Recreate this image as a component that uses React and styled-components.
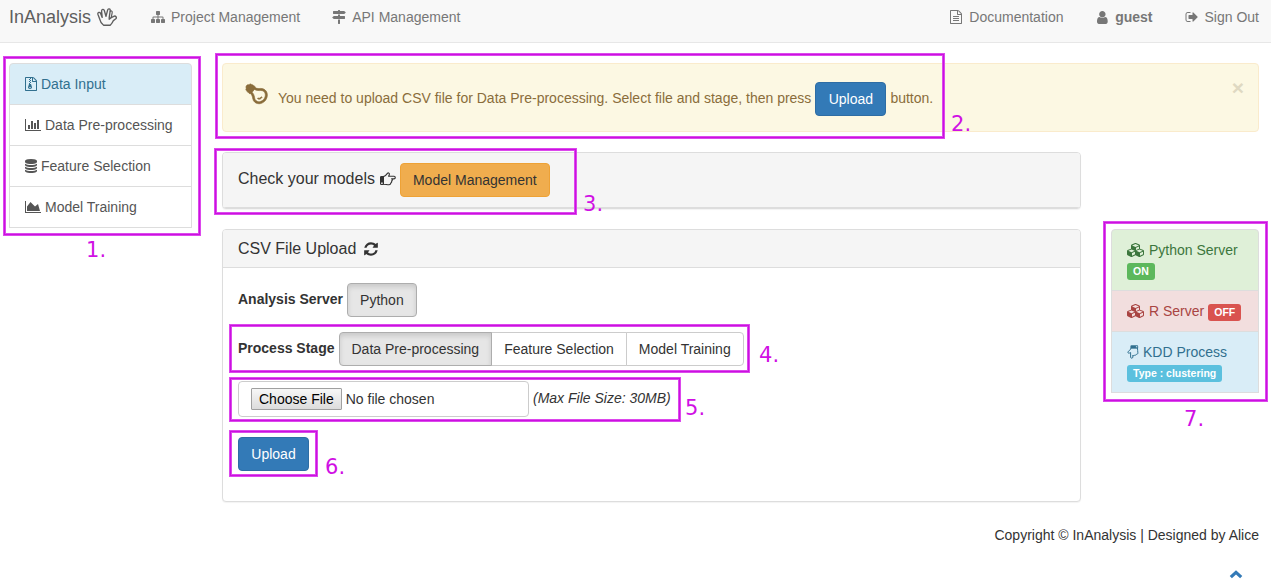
import React from 'react';
import styled, { createGlobalStyle, css } from 'styled-components';

const GlobalStyle = createGlobalStyle`
  * { box-sizing: border-box; }
  body {
    margin: 0;
    overflow: hidden;
    background: #fff;
    color: #333;
    font: 14px/20px "Liberation Sans", Arial, sans-serif;
  }
`;

const paths = {
  sitemap: 'M1792 1248v320q0 40-28 68t-68 28h-320q-40 0-68-28t-28-68v-320q0-40 28-68t68-28h96v-192h-512v192h96q40 0 68 28t28 68v320q0 40-28 68t-68 28h-320q-40 0-68-28t-28-68v-320q0-40 28-68t68-28h96v-192h-512v192h96q40 0 68 28t28 68v320q0 40-28 68t-68 28h-320q-40 0-68-28t-28-68v-320q0-40 28-68t68-28h96v-192q0-52 38-90t90-38h512v-192h-96q-40 0-68-28t-28-68v-320q0-40 28-68t68-28h320q40 0 68 28t28 68v320q0 40-28 68t-68 28h-96v192h512q52 0 90 38t38 90v192h96q40 0 68 28t28 68z',
  signs: 'M1745 297q10 10 10 23t-10 23l-141 141q-28 28-68 28h-1344q-26 0-45-19t-19-45v-256q0-26 19-45t45-19h576v-64q0-26 19-45t45-19h128q26 0 45 19t19 45v64h512q40 0 68 28zm-977 919h256v512q0 26-19 45t-45 19h-128q-26 0-45-19t-19-45v-512zm832-448q26 0 45 19t19 45v256q0 26-19 45t-45 19h-1344q-40 0-68-28l-141-141q-10-10-10-23t10-23l141-141q28-28 68-28h512v-192h256v192h576z',
  fileText: 'M1596 380q28 28 48 76t20 88v1152q0 40-28 68t-68 28h-1344q-40 0-68-28t-28-68v-1600q0-40 28-68t68-28h896q40 0 88 20t76 48zm-444-244v376h376q-10-29-22-41l-313-313q-12-12-41-22zm384 1528v-1024h-416q-40 0-68-28t-28-68v-416h-768v1536h1280zm-1024-864q0-14 9-23t23-9h704q14 0 23 9t9 23v64q0 14-9 23t-23 9h-704q-14 0-23-9t-9-23v-64zm736 224q14 0 23 9t9 23v64q0 14-9 23t-23 9h-704q-14 0-23-9t-9-23v-64q0-14 9-23t23-9h704zm0 256q14 0 23 9t9 23v64q0 14-9 23t-23 9h-704q-14 0-23-9t-9-23v-64q0-14 9-23t23-9h704z',
  archive: 'M768 384v-128h-128v128h128zm128 128v-128h-128v128h128zm-128 128v-128h-128v128h128zm128 128v-128h-128v128h128zm700-388q28 28 48 76t20 88v1152q0 40-28 68t-68 28h-1344q-40 0-68-28t-28-68v-1600q0-40 28-68t68-28h896q40 0 88 20t76 48zm-444-244v376h376q-10-29-22-41l-313-313q-12-12-41-22zm384 1528v-1024h-416q-40 0-68-28t-28-68v-416h-128v128h-128v-128h-512v1536h1280zm-627-721l107 349q8 27 8 52 0 83-72.5 137.5t-183.5 54.5-183.5-54.5-72.5-137.5q0-25 8-52 21-63 120-396v-128h128v128h79q22 0 39 13t23 34zm-141 465q53 0 90.5-19t37.5-45-37.5-45-90.5-19-90.5 19-37.5 45 37.5 45 90.5 19z',
  user: 'M1536 1399q0 109-62.5 187t-150.5 78h-854q-88 0-150.5-78t-62.5-187q0-85 8.5-160.5t31.5-152 58.5-131 94-89 134.5-34.5q131 128 313 128t313-128q76 0 134.5 34.5t94 89 58.5 131 31.5 152 8.5 160.5zm-256-887q0 159-112.5 271.5t-271.5 112.5-271.5-112.5-112.5-271.5 112.5-271.5 271.5-112.5 271.5 112.5 112.5 271.5z',
  signOut: 'M704 1440q0 4 1 20t.5 26.5-3 23.5-10 19.5-20.5 6.5h-320q-119 0-203.5-84.5t-84.5-203.5v-704q0-119 84.5-203.5t203.5-84.5h320q13 0 22.5 9.5t9.5 22.5q0 4 1 20t.5 26.5-3 23.5-10 19.5-20.5 6.5h-320q-66 0-113 47t-47 113v704q0 66 47 113t113 47h312l11.5 1 11.5 3 8 5.5 7 9 2 13.5zm928-544q0 26-19 45l-544 544q-19 19-45 19t-45-19-19-45v-288h-448q-26 0-45-19t-19-45v-384q0-26 19-45t45-19h448v-288q0-26 19-45t45-19 45 19l544 544q19 19 19 45z',
  bars: 'M640 896v512h-256v-512h256zm384-512v1024h-256v-1024h256zm1024 1152v128h-2048v-1536h128v1408h1920zm-640-896v768h-256v-768h256zm384-384v1152h-256v-1152h256z',
  area: 'M2048 1536v128h-2048v-1536h128v1408h1920zm-384-1024l256 896h-1664v-576l448-576 576 576z',
  database: 'M896 768q237 0 443-43t325-127v170q0 69-103 128t-280 93.5-385 34.5-385-34.5-280-93.5-103-128v-170q119 84 325 127t443 43zm0 768q237 0 443-43t325-127v170q0 69-103 128t-280 93.5-385 34.5-385-34.5-280-93.5-103-128v-170q119 84 325 127t443 43zm0-384q237 0 443-43t325-127v170q0 69-103 128t-280 93.5-385 34.5-385-34.5-280-93.5-103-128v-170q119 84 325 127t443 43zm0-1152q208 0 385 34.5t280 93.5 103 128v128q0 69-103 128t-280 93.5-385 34.5-385-34.5-280-93.5-103-128v-128q0-69 103-128t280-93.5 385-34.5z',
  refresh: 'M1639 1056q0 5-1 7-64 268-268 434.5t-478 166.5q-146 0-282.5-55t-243.5-157l-129 129q-19 19-45 19t-45-19-19-45v-448q0-26 19-45t45-19h448q26 0 45 19t19 45-19 45l-137 137q71 66 161 102t187 36q134 0 250-65t186-179q11-17 53-117 8-23 30-23h192q13 0 22.5 9.5t9.5 22.5zm25-800v448q0 26-19 45t-45 19h-448q-26 0-45-19t-19-45 19-45l138-138q-148-137-349-137-134 0-250 65t-186 179q-11 17-53 117-8 23-30 23h-199q-13 0-22.5-9.5t-9.5-22.5v-7q65-268 270-434.5t480-166.5q146 0 284 55.5t245 156.5l130-129q19-19 45-19t45 19 19 45z',
  cubes: 'M640 1632l384-192v-314l-384 164v342zm-64-454l404-173-404-173-404 173zm1088 454l384-192v-314l-384 164v342zm-64-454l404-173-404-173-404 173zm-448-293l384-165v-266l-384 164v267zm-64-379l441-189-441-189-441 189zm1088 518v416q0 36-19 67t-52 47l-448 224q-25 14-57 14t-57-14l-448-224q-5-2-7-4-2 2-7 4l-448 224q-25 14-57 14t-57-14l-448-224q-33-16-52-47t-19-67v-416q0-38 21.5-70t56.5-48l434-186v-400q0-38 21.5-70t56.5-48l448-192q23-10 50-10t50 10l448 192q35 16 56.5 48t21.5 70v400l434 186q36 16 57 48t21 70z',
  bulb: 'M1120 576q0 13-9.5 22.5t-22.5 9.5-22.5-9.5-9.5-22.5q0-46-54-71t-106-25q-13 0-22.5-9.5t-9.5-22.5 9.5-22.5 22.5-9.5q50 0 99.5 16t87 54 37.5 90zm160 0q0-72-34.5-134t-90-101.5-123-62-136.5-22.5-136.5 22.5-123 62-90 101.5-34.5 134q0 101 68 180 10 11 30.5 33t30.5 33q128 153 141 298h228q13-145 141-298 10-11 30.5-33t30.5-33q68-79 68-180zm128 0q0 155-103 268-45 49-74.5 87t-59.5 95.5-34 107.5q47 28 47 82 0 37-25 64 25 27 25 64 0 52-45 81 13 23 13 47 0 46-31.5 71t-77.5 25q-20 44-60 70t-87 26-87-26-60-70q-46 0-77.5-25t-31.5-71q0-24 13-47-45-29-45-81 0-37 25-64-25-27-25-64 0-54 47-82-4-50-34-107.5t-59.5-95.5-74.5-87q-103-113-103-268 0-99 44.5-184.5t117-142 164-89 186.5-32.5 186.5 32.5 164 89 117 142 44.5 184.5z',
  chevron: 'M896 420L1700 1164L1420 1440L896 960L372 1440L92 1164Z',
};

const Svg = styled.svg`
  flex: none;
  display: block;
  fill: currentColor;
`;

/* box = [left edge, width] in the 1792-unit glyph grid */
const Icon = ({ name, size = 14, box = [0, 1792], className }) => (
  <Svg
    className={className}
    width={(box[1] / 1792) * size}
    height={size}
    viewBox={`${box[0]} 0 ${box[1]} 1792`}
    aria-hidden="true"
  >
    <path d={paths[name]} />
  </Svg>
);

const SpockHand = () => (
  <Svg width="20" height="18" viewBox="0 0 20 18" aria-hidden="true">
    <path
      fill="none"
      stroke="currentColor"
      strokeWidth="1.35"
      strokeLinejoin="round"
      d="M6.6 17.2C4.2 15.6 3.2 13.4 2.6 10.8L.9 6.2C.5 4.4 2.7 3.6 3.6 5.4L5.2 9.4 4.6 3.2C4.5 1.2 6.8.8 7.3 2.5L9 8.4 10.6 2.1C11.1.2 13.5.7 13.2 2.6L12.2 9.6V11.2L14.2 9.6 16.8 8.3C18.6 7.4 20.2 9.5 18.8 10.8L16.4 12.6C15.6 14.6 14.4 16.2 13.2 17.2Z"
    />
    <path
      fill="none"
      stroke="currentColor"
      strokeWidth="1.2"
      d="M13 3.6C14 2.4 15.4 3 15.2 4.6L14.2 9.6"
    />
  </Svg>
);

const PointingHand = ({ down = false }) => (
  <Svg
    width={down ? 12 : 16}
    height={14}
    viewBox={down ? '0 0 14 16' : '0 0 16 14'}
    aria-hidden="true"
  >
    <g transform={down ? 'matrix(0 1 1 0 0 0)' : undefined}>
      <path
        fillRule="evenodd"
        d="M0 5.2Q0 4 1.2 4H3.6V13H1.2Q0 13 0 11.8ZM1.2 10.4V12H2.8V10.4Z"
      />
      <path
        fill="none"
        stroke="currentColor"
        strokeWidth="1.15"
        strokeLinejoin="round"
        d="M3.4 4.6C5.3 4.2 6.2 3 7.2 1.6 8.4.3 9.8 1.2 9.2 2.9L8.6 4.2H14C15.7 4.2 15.7 6.8 14 6.8H11.6C12.6 7 12.6 8.7 11.5 9 12 9.6 11.6 10.8 10.7 11 10.8 12 10.2 12.7 9 12.7 7 12.7 5.5 12.2 3.4 12.2Z"
      />
    </g>
  </Svg>
);

const Page = styled.div`
  position: relative;
  width: 1271px;
  height: 587px;
`;

const Navbar = styled.nav`
  display: flex;
  align-items: flex-start;
  height: 43px;
  padding: 7px 12px 0 9px;
  background: #f8f8f8;
  border-bottom: 1px solid #e7e7e7;
  color: #777;
`;

const Brand = styled.div`
  display: flex;
  align-items: center;
  gap: 6px;
  width: 142px;
  font-size: 18px;
  color: #5e5e5e;
`;

const NavItem = styled.div`
  display: flex;
  align-items: center;
  gap: ${(p) => p.$gap ?? 6}px;
  margin-right: ${(p) => p.$after ?? 0}px;
  font-weight: ${(p) => (p.$bold ? 700 : 400)};
  white-space: nowrap;
`;

const NavRight = styled.div`
  display: flex;
  margin-left: auto;
`;

const Body = styled.div`
  display: flex;
  align-items: flex-start;
  gap: 30px;
  padding: 20px 12px 0 9px;
`;

const Sidebar = styled.div`
  flex: none;
  width: 183px;
`;

const tones = {
  plain: css`background: #fff; color: #555;`,
  info: css`background: #d9edf7; color: #31708f;`,
  success: css`background: #dff0d8; color: #3c763d;`,
  danger: css`background: #f2dede; color: #a94442;`,
};

const ListItem = styled.div`
  padding: 10px 15px;
  margin-bottom: -1px;
  border: 1px solid #ddd;
  ${(p) => tones[p.$tone || 'plain']}
  &:first-child { border-radius: 4px 4px 0 0; }
  &:last-child { margin-bottom: 0; }
`;

const ItemLine = styled.div`
  display: flex;
  align-items: center;
  gap: 4px;
  white-space: nowrap;
`;

const Badge = styled.span`
  display: block;
  width: fit-content;
  height: 17px;
  margin-top: 3px;
  padding: 0 6px;
  border-radius: 3px;
  background: ${(p) => p.$color};
  color: #fff;
  font-weight: 700;
  font-size: 10.5px;
  line-height: 17px;
`;

const Content = styled.main`
  flex: 1;
`;

const Alert = styled.div`
  display: flex;
  align-items: center;
  height: 69px;
  margin-bottom: 20px;
  padding: 0 14px 0 19px;
  border: 1px solid #faebcc;
  border-radius: 4px;
  background: #fcf8e3;
  color: #8a6d3b;
`;

const TiltedIcon = styled(Icon)`
  transform: rotate(128deg);
  margin: -9px 8px 0 0;
  stroke: currentColor;
  stroke-width: 40px;
`;

const AlertText = styled.div`
  display: flex;
  align-items: center;
  gap: 4px;
  height: 34px;

  & > button { margin-top: 2px; }
`;

const Close = styled.span`
  margin: -20px 0 0 auto;
  color: #dfd9c2;
  font-size: 21px;
  font-weight: 700;
`;

const buttonTones = {
  primary: css`background: #337ab7; border-color: #2e6da4; color: #fff;`,
  warning: css`background: #f0ad4e; border-color: #eea236; color: #333;`,
  plain: css`background: #fff; border-color: #ccc; color: #333;`,
  active: css`
    background: #e6e6e6;
    border-color: #adadad;
    color: #333;
    box-shadow: inset 0 3px 5px rgba(0, 0, 0, 0.125);
    position: relative;
    z-index: 1;
  `,
};

const Button = styled.button`
  flex: none;
  height: 34px;
  min-width: 71px;
  padding: 0 12px;
  border: 1px solid;
  border-radius: 4px;
  font-family: inherit;
  font-size: 14px;
  line-height: 20px;
  white-space: nowrap;
  ${(p) => buttonTones[p.$tone]}
`;

const ServerButton = styled(Button)`
  min-width: 0;
`;

const ButtonGroup = styled.div`
  display: flex;
  & > button { border-radius: 0; }
  & > button + button { margin-left: -1px; }
  & > button:first-child { border-radius: 4px 0 0 4px; }
  & > button:last-child { border-radius: 0 4px 4px 0; }
`;

const Columns = styled.div`
  display: flex;
  align-items: flex-start;
  justify-content: space-between;
`;

const PanelStack = styled.div`
  display: flex;
  flex-direction: column;
  gap: 20px;
  width: 859px;
`;

const Panel = styled.section`
  border: 1px solid #ddd;
  border-radius: 4px;
  background: #fff;
  box-shadow: 0 1px 1px rgba(0, 0, 0, 0.05);
  height: ${(p) => p.$height}px;
  overflow: hidden;
`;

const PanelHeader = styled.div`
  display: flex;
  align-items: center;
  gap: ${(p) => p.$gap}px;
  height: ${(p) => p.$height}px;
  padding: 0 15px;
  border-bottom: 1px solid #ddd;
  background: #f5f5f5;
  font-size: 16px;
`;

const Title = styled.div`
  display: flex;
  align-items: center;
  gap: 5px;
  margin-top: -3px;
`;

const Form = styled.div`
  display: flex;
  flex-direction: column;
  align-items: flex-start;
  gap: 15px;
  padding: 15px;
`;

const Row = styled.div`
  display: flex;
  align-items: center;
  gap: 4px;
`;

const Label = styled.label`
  font-weight: 700;
  margin-top: -2px;
`;

const FileRow = styled(Row)`
  margin-bottom: 5px;
`;

const FileField = styled.div`
  display: flex;
  align-items: center;
  gap: 4px;
  width: 291px;
  height: 36px;
  padding: 0 12px;
  border: 1px solid #ccc;
  border-radius: 4px;
`;

const FileButton = styled.button`
  height: 22px;
  padding: 0 7px;
  border: 1px solid #a0a0a0;
  border-radius: 1px;
  background: linear-gradient(#f7f7f7, #dcdcdc);
  color: #000;
  font: inherit;
  line-height: 20px;
`;

const Hint = styled.em`
  margin-top: -2px;
`;

const ServerList = styled.aside`
  width: 148px;
  margin-top: 77px;
`;

const Footer = styled.footer`
  display: flex;
  flex-direction: column;
  align-items: flex-end;
  padding: 23px 12px 0;
`;

const ToTop = styled.div`
  margin: 22px 16px 0 0;
  color: #337ab7;
`;

const Mark = styled.div`
  position: absolute;
  z-index: 2;
  left: ${(p) => p.$box[0] + 1}px;
  top: ${(p) => p.$box[1] + 1}px;
  width: ${(p) => p.$box[2] - 2}px;
  height: ${(p) => p.$box[3] - 2}px;
  border: 1px solid #cb10e0;
  box-shadow: 0 0 0 1px #dc48ec, inset 0 0 0 1px #dc48ec;
  pointer-events: none;
`;

const MarkNumber = styled.span`
  position: absolute;
  z-index: 2;
  left: ${(p) => p.$at[0]}px;
  top: ${(p) => p.$at[1]}px;
  color: #d010e4;
  font: 21px/24px "DejaVu Sans", sans-serif;
`;

const marks = [
  { box: [3, 56, 198, 180], at: [86, 238] },
  { box: [215, 53, 730, 86], at: [951, 112] },
  { box: [214, 148, 363, 67], at: [583, 192] },
  { box: [229, 324, 521, 49], at: [759, 343] },
  { box: [229, 377, 452, 45], at: [685, 396] },
  { box: [229, 430, 89, 47], at: [325, 455] },
  { box: [1103, 221, 165, 181], at: [1184, 407] },
];

export default function App() {
  return (
    <Page>
      <GlobalStyle />
      <Navbar>
        <Brand>InAnalysis <SpockHand /></Brand>
        <NavItem $after={32}><Icon name="sitemap" />Project Management</NavItem>
        <NavItem><Icon name="signs" />API Management</NavItem>
        <NavRight>
          <NavItem $gap={7} $after={34}><Icon name="fileText" box={[128, 1536]} />Documentation</NavItem>
          <NavItem $gap={7} $after={32} $bold><Icon name="user" box={[256, 1280]} size={15} />guest</NavItem>
          <NavItem $gap={7}><Icon name="signOut" box={[0, 1664]} />Sign Out</NavItem>
        </NavRight>
      </Navbar>

      <Body>
        <Sidebar>
          <ListItem $tone="info"><ItemLine><Icon name="archive" box={[128, 1536]} />Data Input</ItemLine></ListItem>
          <ListItem><ItemLine><Icon name="bars" box={[0, 2048]} />Data Pre-processing</ItemLine></ListItem>
          <ListItem><ItemLine><Icon name="database" box={[128, 1536]} />Feature Selection</ItemLine></ListItem>
          <ListItem><ItemLine><Icon name="area" box={[0, 2048]} />Model Training</ItemLine></ListItem>
        </Sidebar>

        <Content>
          <Alert>
            <TiltedIcon name="bulb" size={28} />
            <AlertText>
              You need to upload CSV file for Data Pre-processing. Select file and stage, then press
              <Button $tone="primary">Upload</Button>
              button.
            </AlertText>
            <Close>×</Close>
          </Alert>

          <Columns>
            <PanelStack>
              <Panel $height={57}>
                <PanelHeader $height={55} $gap={4}>
                  <Title>Check your models <PointingHand /></Title>
                  <Button $tone="warning">Model Management</Button>
                </PanelHeader>
              </Panel>

              <Panel $height={273}>
                <PanelHeader $height={38} $gap={7}>
                  CSV File Upload <Icon name="refresh" size={16} />
                </PanelHeader>
                <Form>
                  <Row>
                    <Label>Analysis Server</Label>
                    <ServerButton $tone="active">Python</ServerButton>
                  </Row>
                  <Row>
                    <Label>Process Stage</Label>
                    <ButtonGroup>
                      <Button $tone="active">Data Pre-processing</Button>
                      <Button $tone="plain">Feature Selection</Button>
                      <Button $tone="plain">Model Training</Button>
                    </ButtonGroup>
                  </Row>
                  <FileRow>
                    <FileField>
                      <FileButton>Choose File</FileButton>
                      No file chosen
                    </FileField>
                    <Hint>(Max File Size: 30MB)</Hint>
                  </FileRow>
                  <Button $tone="primary">Upload</Button>
                </Form>
              </Panel>
            </PanelStack>

            <ServerList>
              <ListItem $tone="success">
                <ItemLine><Icon name="cubes" box={[0, 2304]} />Python Server</ItemLine>
                <Badge $color="#5cb85c">ON</Badge>
              </ListItem>
              <ListItem $tone="danger">
                <ItemLine>
                  <Icon name="cubes" box={[0, 2304]} />R Server
                  <Badge $color="#d9534f">OFF</Badge>
                </ItemLine>
              </ListItem>
              <ListItem $tone="info">
                <ItemLine><PointingHand down />KDD Process</ItemLine>
                <Badge $color="#5bc0de">Type : clustering</Badge>
              </ListItem>
            </ServerList>
          </Columns>
        </Content>
      </Body>

      <Footer>
        Copyright © InAnalysis | Designed by Alice
        <ToTop><Icon name="chevron" /></ToTop>
      </Footer>

      {marks.map((m, i) => (
        <React.Fragment key={i}>
          <Mark $box={m.box} />
          <MarkNumber $at={m.at}>{i + 1}.</MarkNumber>
        </React.Fragment>
      ))}
    </Page>
  );
}
